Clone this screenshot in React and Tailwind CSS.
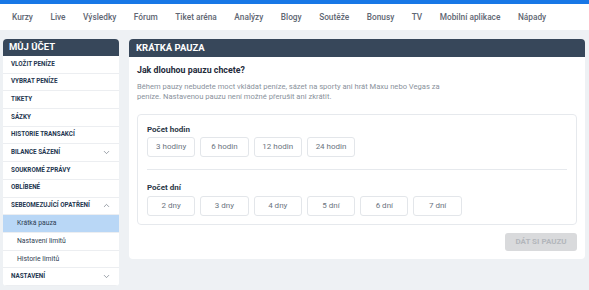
import { ChevronDown, ChevronUp } from 'lucide-react';

const navItems = ['Kurzy', 'Live', 'Výsledky', 'Fórum', 'Tiket aréna', 'Analýzy', 'Blogy', 'Soutěže', 'Bonusy', 'TV', 'Mobilní aplikace', 'Nápady'];

const menu = [
    { label: 'VLOŽIT PENÍZE' },
    { label: 'VYBRAT PENÍZE' },
    { label: 'TIKETY' },
    { label: 'SÁZKY' },
    { label: 'HISTORIE TRANSAKCÍ' },
    { label: 'BILANCE SÁZENÍ', chevron: 'down' },
    { label: 'SOUKROMÉ ZPRÁVY' },
    { label: 'OBLÍBENÉ' },
    { label: 'SEBEOMEZUJÍCÍ OPATŘENÍ', chevron: 'up' },
    { label: 'Krátká pauza', sub: true, active: true },
    { label: 'Nastavení limitů', sub: true },
    { label: 'Historie limitů', sub: true },
    { label: 'NASTAVENÍ', chevron: 'down' },
];

const hours = ['3 hodiny', '6 hodin', '12 hodin', '24 hodin'];
const days = ['2 dny', '3 dny', '4 dny', '5 dní', '6 dní', '7 dní'];

function OptionButton({ children }) {
    return (
        <button className="w-[48.3px] h-[20px] rounded-[3px] border border-[#e3e6ea] bg-white text-[8px] text-[#6b7480]">
            {children}
        </button>
    );
}

export default function App() {
    return (
        <div className="w-[589px] h-[290px] bg-[#eef1f4] overflow-hidden font-['Roboto',sans-serif]">
            <div className="h-[4px] bg-[#1877e6]" />
            <nav className="h-[26px] bg-white flex items-center pl-[12px] gap-[17.5px] text-[8.3px] font-medium text-[#5f6773] whitespace-nowrap">
                {navItems.map((item) => (
                    <span key={item}>{item}</span>
                ))}
            </nav>

            <div className="flex gap-[10px] pl-[3px] pt-[9px] items-start">
                <aside className="w-[116px] rounded-[4px] bg-white overflow-hidden">
                    <div className="h-[17px] bg-[#37475a] text-white text-[9.5px] font-bold px-[6px] flex items-center">
                        MŮJ ÚČET
                    </div>
                    <ul>
                        {menu.map((m) => (
                            <li
                                key={m.label}
                                className={
                                    'h-[17.7px] flex items-center justify-between border-b border-[#eceef1] ' +
                                    (m.sub ? 'pl-[14px] pr-[8px] text-[6.8px] text-[#2e3d52] ' : 'pl-[8px] pr-[8px] text-[6.3px] font-bold text-[#243650] ') +
                                    (m.active ? 'bg-[#b9d7f6]' : 'bg-white')
                                }
                            >
                                <span>{m.label}</span>
                                {m.chevron === 'down' && <ChevronDown size={9} strokeWidth={1.8} className="text-[#6b7480]" />}
                                {m.chevron === 'up' && <ChevronUp size={9} strokeWidth={1.8} className="text-[#6b7480]" />}
                            </li>
                        ))}
                    </ul>
                </aside>

                <main className="w-[456px] rounded-[4px] bg-white overflow-hidden">
                    <div className="h-[18px] bg-[#37475a] text-white text-[9.5px] font-bold px-[7px] flex items-center">
                        KRÁTKÁ PAUZA
                    </div>
                    <div className="px-[8px] pt-[7px] pb-[8px]">
                        <h2 className="text-[8.8px] font-bold text-[#1f2b3b] leading-[12px]">Jak dlouhou pauzu chcete?</h2>
                        <p className="mt-[6px] text-[7.6px] leading-[10px] text-[#8a929c]">
                            Během pauzy nebudete moct vkládat peníze, sázet na sporty ani hrát Maxu nebo Vegas za
                            <br />
                            peníze. Nastavenou pauzu není možné přerušit ani zkrátit.
                        </p>

                        <div className="mt-[12px] border border-[#e6e9ed] rounded-[4px] px-[9px] pt-[10px] pb-[8px]">
                            <div className="text-[8px] font-bold text-[#2a3646] leading-[10px]">Počet hodin</div>
                            <div className="mt-[2px] flex gap-[5px]">
                                {hours.map((h) => (
                                    <OptionButton key={h}>{h}</OptionButton>
                                ))}
                            </div>
                            <div className="mt-[12px] h-px bg-[#e6e9ed]" />
                            <div className="mt-[13px] text-[8px] font-bold text-[#2a3646] leading-[10px]">Počet dní</div>
                            <div className="mt-[3px] flex gap-[5px]">
                                {days.map((d) => (
                                    <OptionButton key={d}>{d}</OptionButton>
                                ))}
                            </div>
                        </div>

                        <div className="mt-[8px] flex justify-end">
                            <button className="w-[72px] h-[18px] rounded-[3px] bg-[#d9dadc] text-[8px] font-bold text-[#b3b6bb]">
                                DÁT SI PAUZU
                            </button>
                        </div>
                    </div>
                </main>
            </div>
        </div>
    );
}
